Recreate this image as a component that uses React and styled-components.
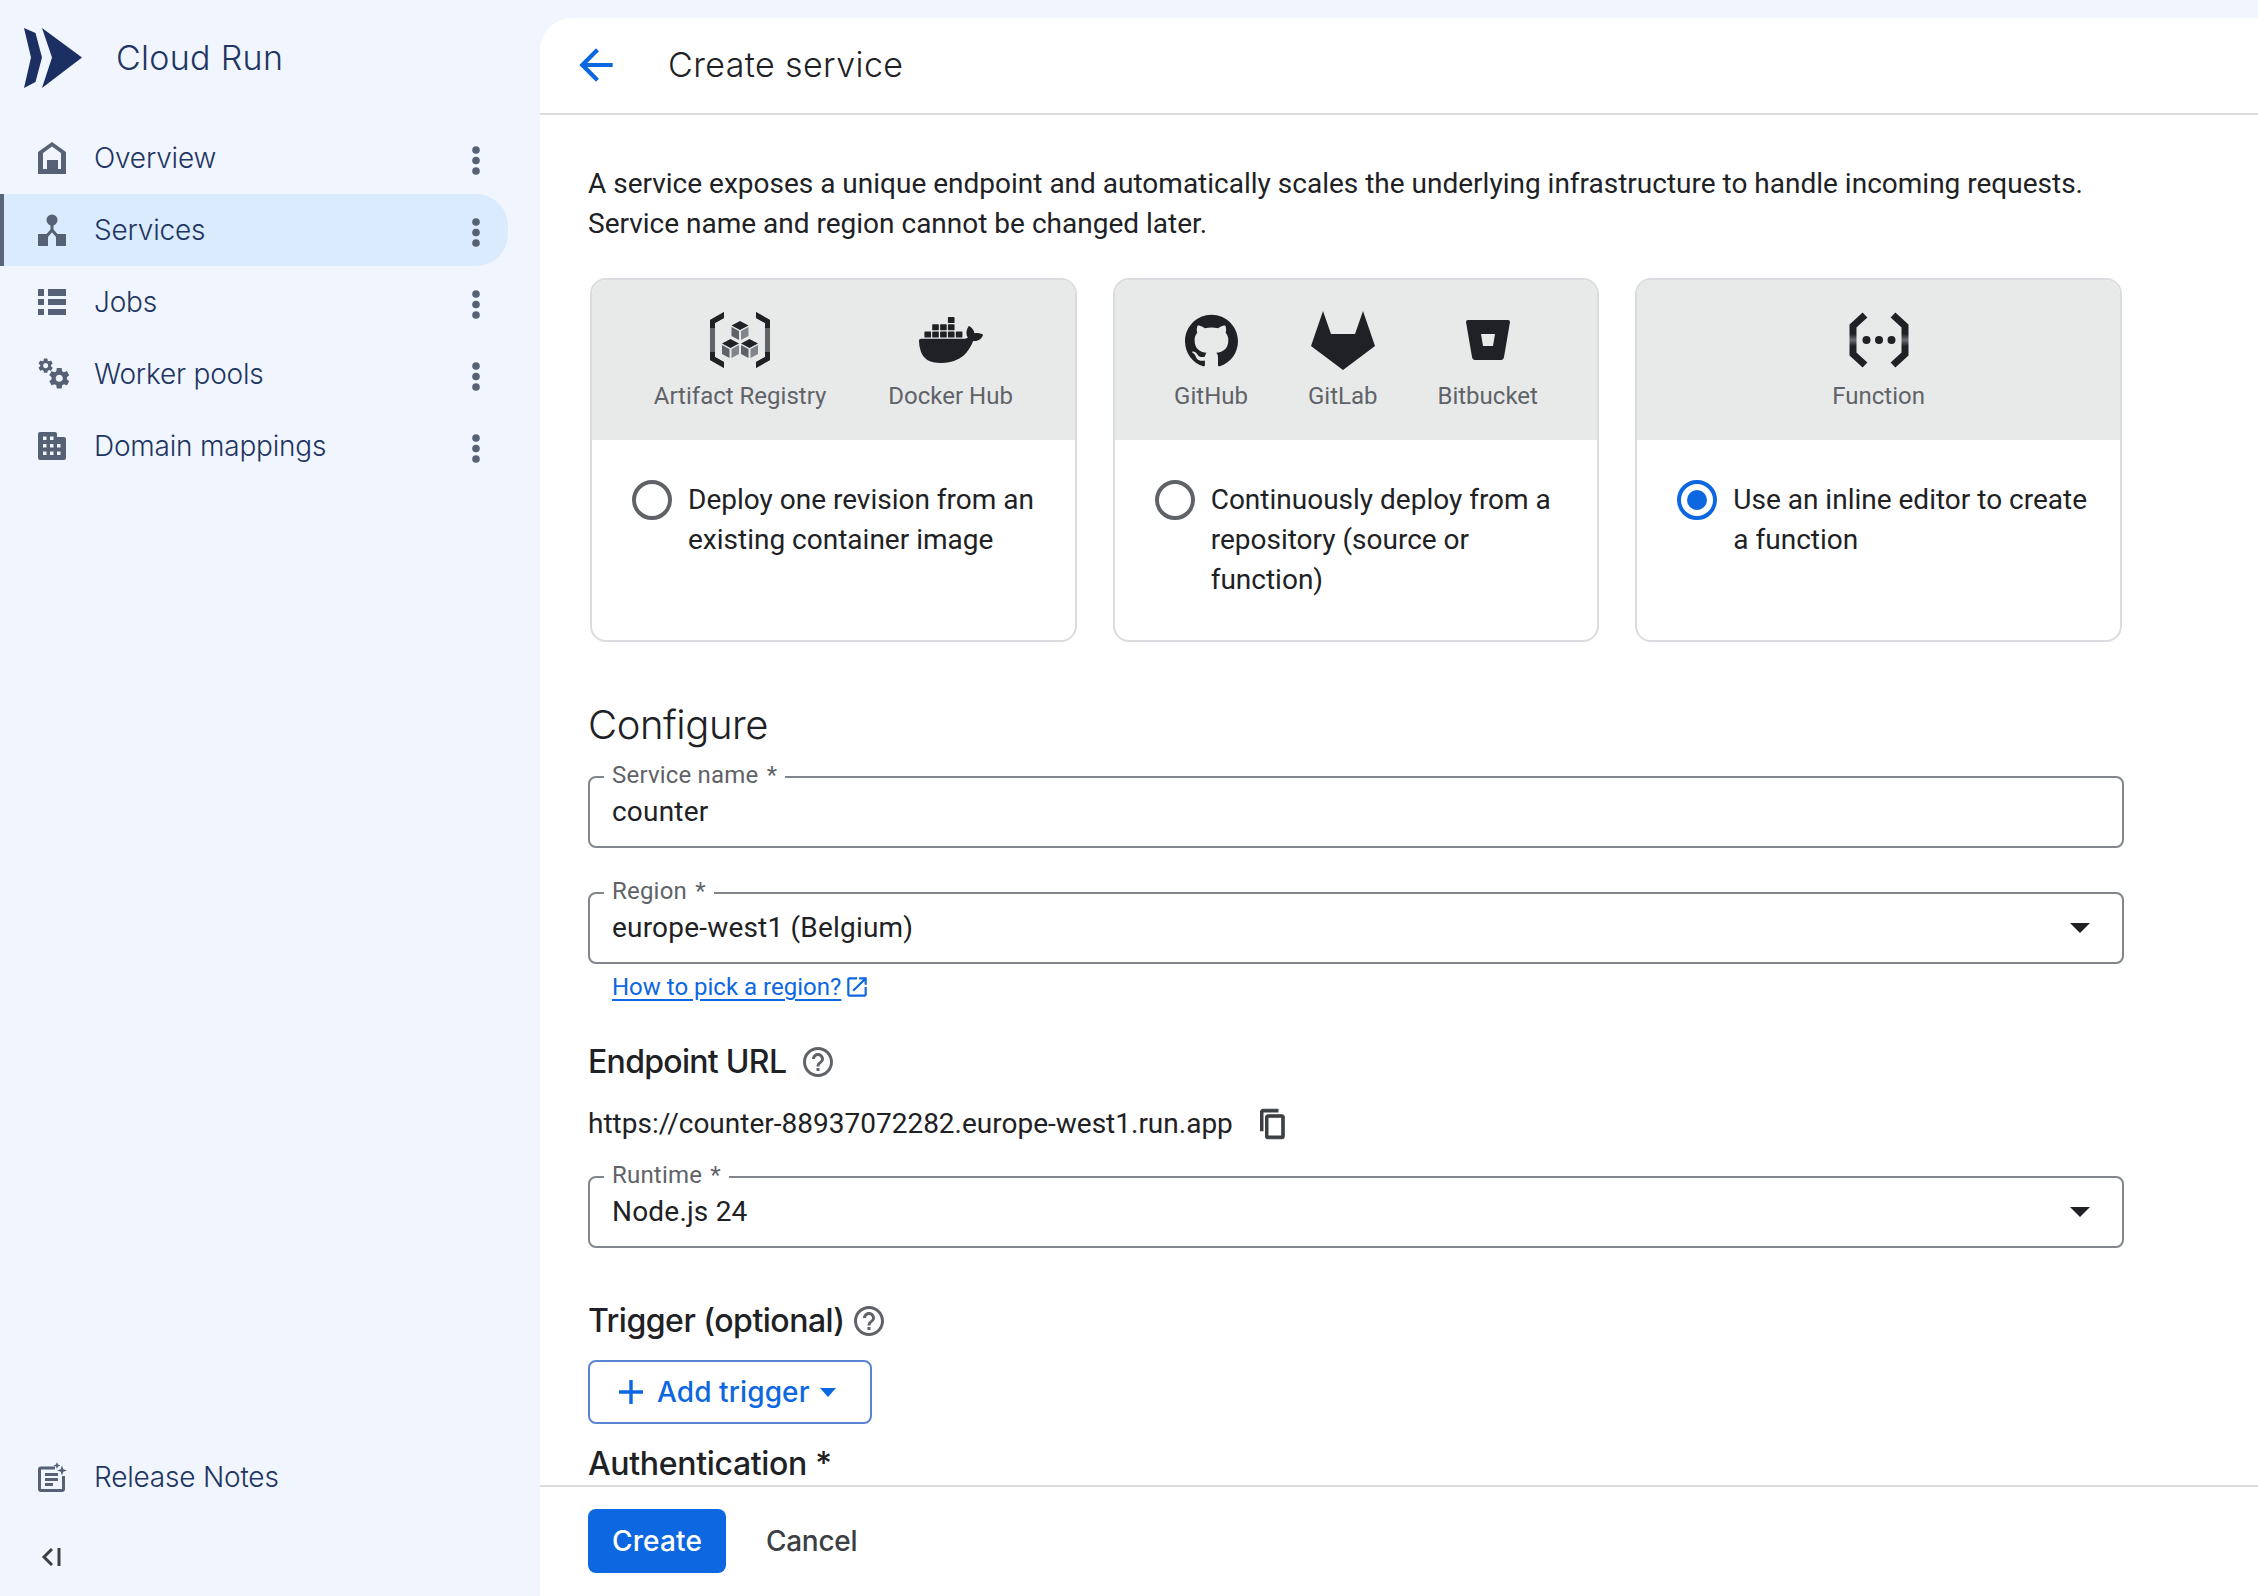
import React from "react";
import styled, { createGlobalStyle } from "styled-components";
import { SiDocker, SiGithub } from "react-icons/si";

const display = `"Inter", "Noto Sans", sans-serif`;
const body = `"Roboto", "Liberation Sans", sans-serif`;
const blue = "#0c67e0";

const Global = createGlobalStyle`
  html, body { margin: 0; padding: 0; height: 100%; background: #f0f5fe; }
  #root { height: 100%; }
  * { box-sizing: border-box; }
`;

const Shell = styled.div`
  display: grid;
  grid-template-columns: 540px 1fr;
  height: 1596px;
  overflow: hidden;
  background: #f0f5fe;
`;

const Sidebar = styled.aside`
  display: flex;
  flex-direction: column;
  height: 100%;
`;

const Brand = styled.div`
  display: flex;
  align-items: center;
  gap: 34px;
  height: 122px;
  padding: 0 0 6px 24px;
  color: #1b2f63;
`;

const BrandName = styled.span`
  font: 350 34px/40px ${display};
  letter-spacing: 0.3px;
  color: #1f3562;
`;

const NavList = styled.nav`
  display: flex;
  flex-direction: column;
  flex: 1;
`;

const NavRow = styled.div`
  display: flex;
  align-items: center;
  width: 508px;
  height: 72px;
  padding: 0 28px 0 ${(p) => (p.$active ? 34 : 38)}px;
  border-left: ${(p) => (p.$active ? "4px solid #5a6579" : "0")};
  border-radius: 0 32px 32px 0;
  background: ${(p) => (p.$active ? "#d9ebfc" : "transparent")};
`;

const IconSlot = styled.span`
  display: flex;
  align-items: center;
  width: 56px;
  flex: none;
  color: #566175;
`;

const NavLabel = styled.span`
  flex: 1;
  font: 350 28px/36px ${display};
  letter-spacing: -0.2px;
  color: #1f3562;
`;

const KebabIcon = styled.svg`
  width: 8px;
  height: 29px;
  margin-top: 4px;
  flex: none;
  fill: #566175;
`;

const SideFoot = styled.div`
  display: flex;
  flex-direction: column;
`;

const Collapse = styled.div`
  display: flex;
  align-items: center;
  height: 83px;
  padding: 4px 0 0 41px;
  color: #3c4043;
`;

const Main = styled.main`
  display: flex;
  flex-direction: column;
  height: 1578px;
  margin-top: 18px;
  background: #fff;
  border-top-left-radius: 32px;
  overflow: hidden;
`;

const TopBar = styled.header`
  display: flex;
  align-items: center;
  gap: 47px;
  flex: none;
  height: 97px;
  padding: 0 0 2px 31px;
  border-bottom: 2px solid #dadce0;
`;

const PageTitle = styled.h1`
  margin: 0;
  font: 350 34px/40px ${display};
  letter-spacing: 0.4px;
  color: #202124;
`;

const Content = styled.div`
  flex: 1;
  min-height: 0;
  overflow: hidden;
  padding: 49px 0 0 48px;
`;

const Column = styled.div`
  width: 1536px;
`;

const Intro = styled.p`
  margin: 0;
  font: 400 28px/40px ${body};
  color: #202124;
`;

const CardGrid = styled.div`
  display: grid;
  grid-template-columns: repeat(3, 1fr);
  gap: 36px;
  margin: 34px 2px 0;
`;

const Card = styled.div`
  height: 364px;
  border: 2px solid #dadce0;
  border-radius: 16px;
  overflow: hidden;
  background: #fff;
`;

const CardHead = styled.div`
  display: flex;
  justify-content: center;
  gap: ${(p) => p.$gap}px;
  height: 160px;
  padding-top: 30px;
  background: #e8eaea;
`;

const Source = styled.div`
  display: flex;
  flex-direction: column;
  align-items: center;
`;

const SourceIcon = styled.div`
  display: flex;
  align-items: center;
  justify-content: center;
  height: 60px;
  color: #202124;
`;

const SourceLabel = styled.span`
  margin-top: 10px;
  font: 400 24px/32px ${body};
  color: #5f6368;
`;

const CardBody = styled.div`
  display: flex;
  gap: 16px;
  padding: 40px 24px 0 40px;
`;

const Radio = styled.span`
  display: flex;
  align-items: center;
  justify-content: center;
  flex: none;
  width: 40px;
  height: 40px;
  border-radius: 50%;
  border: 4px solid ${(p) => (p.$on ? blue : "#5f6368")};
  &::after {
    content: "";
    display: ${(p) => (p.$on ? "block" : "none")};
    width: 20px;
    height: 20px;
    border-radius: 50%;
    background: ${blue};
  }
`;

const CardText = styled.span`
  font: 400 28px/40px ${body};
  color: #202124;
`;

const Section = styled.h2`
  margin: ${(p) => p.$top}px 0 0;
  font: 350 40px/48px ${display};
  letter-spacing: -0.45px;
  color: #202124;
`;

const Field = styled.div`
  position: relative;
  display: flex;
  align-items: center;
  justify-content: space-between;
  height: 72px;
  margin-top: ${(p) => p.$top}px;
  padding: 0 32px 0 22px;
  border: 2px solid #80868b;
  border-radius: 8px;
  font: 400 28px/40px ${body};
  letter-spacing: 0.2px;
  color: #202124;
`;

const FieldLabel = styled.label`
  position: absolute;
  top: -19px;
  left: 14px;
  padding: 0 8px;
  background: #fff;
  font: 400 24px/32px ${body};
  color: #5f6368;
`;

const Star = styled.span`
  margin-left: 2px;
`;

const Caret = styled.span`
  width: 0;
  height: 0;
  border-left: 10px solid transparent;
  border-right: 10px solid transparent;
  border-top: 10px solid #202124;
`;

const HelpRow = styled.div`
  display: flex;
  align-items: center;
  gap: 3px;
  margin: 7px 0 0 24px;
  font: 400 24px/32px ${body};
`;

const HelpLink = styled.a`
  color: ${blue};
  text-decoration: underline;
  text-underline-offset: 4px;
`;

const SubHead = styled.h3`
  display: flex;
  align-items: center;
  gap: ${(p) => p.$gap}px;
  margin: ${(p) => p.$top}px 0 0;
  font: 500 32px/40px ${display};
  letter-spacing: ${(p) => p.$track}px;
  color: #202124;
`;

const UrlRow = styled.div`
  display: flex;
  align-items: center;
  gap: 25px;
  margin-top: 22px;
  font: 400 28px/40px ${body};
  color: #202124;
`;

const AddButton = styled.button`
  display: flex;
  align-items: center;
  width: 284px;
  height: 64px;
  margin-top: 19px;
  padding: 0 0 0 29px;
  background: #fff;
  border: 2px solid #5a84d2;
  border-radius: 8px;
  font: 500 28px/36px ${display};
  letter-spacing: 0.1px;
  color: ${blue};
`;

const BtnCaret = styled.span`
  width: 0;
  height: 0;
  margin-left: 10px;
  border-left: 8px solid transparent;
  border-right: 8px solid transparent;
  border-top: 9px solid ${blue};
`;

const Footer = styled.footer`
  display: flex;
  align-items: center;
  gap: 16px;
  flex: none;
  height: 111px;
  padding: 0 0 2px 48px;
  border-top: 2px solid #dadce0;
  background: #fff;
`;

const CreateButton = styled.button`
  width: 138px;
  height: 64px;
  border: 0;
  border-radius: 8px;
  background: ${blue};
  font: 500 28px/36px ${display};
  letter-spacing: 0.15px;
  color: #fff;
`;

const CancelButton = styled.button`
  height: 64px;
  padding: 0 24px;
  border: 0;
  background: transparent;
  font: 500 28px/36px ${display};
  letter-spacing: -0.3px;
  color: #3c4043;
`;

const Logo = () => (
  <svg width="58" height="60" viewBox="0 0 58 60" fill="#1b2f63">
    <polygon points="0,0 11.5,5 18,29.5 11.5,54 0,60 7,29.5" />
    <polygon points="18,0 58,29.5 18,60 28,29.5" />
  </svg>
);

const HomeIcon = () => (
  <svg width="28" height="32" viewBox="0 0 28 32" fill="currentColor">
    <path fillRule="evenodd" d="M14 0 L28 10 V32 H0 V10 Z M14 4.5 L5 11 V27 H9 V18 H20 V27 H23 V11 Z" />
  </svg>
);

const ServicesIcon = () => (
  <svg width="28" height="32" viewBox="0 0 28 32" fill="currentColor">
    <circle cx="14" cy="6" r="5.5" />
    <rect x="0" y="20" width="10" height="12" />
    <rect x="18" y="20" width="10" height="12" />
    <path d="M14 10 V16 L8 23 M14 16 L20 23" fill="none" stroke="currentColor" strokeWidth="3" />
  </svg>
);

const JobsIcon = () => (
  <svg width="28" height="26" viewBox="0 0 28 26" fill="currentColor">
    <rect x="0" y="0" width="6" height="7" />
    <rect x="10" y="0" width="18" height="7" />
    <rect x="0" y="10" width="6" height="6" />
    <rect x="10" y="10" width="18" height="6" />
    <rect x="0" y="20" width="6" height="6" />
    <rect x="10" y="20" width="18" height="6" />
  </svg>
);

const gearPath =
  "M19.43 12.98c.04-.32.07-.64.07-.98s-.03-.66-.07-.98l2.11-1.65c.19-.15.24-.42.12-.64l-2-3.46c-.12-.22-.39-.3-.61-.22l-2.49 1c-.52-.4-1.08-.73-1.69-.98l-.38-2.65C14.46 2.18 14.25 2 14 2h-4c-.25 0-.46.18-.49.42l-.38 2.65c-.61.25-1.17.59-1.69.98l-2.49-1c-.23-.09-.49 0-.61.22l-2 3.46c-.13.22-.07.49.12.64l2.11 1.65c-.04.32-.07.65-.07.98s.03.66.07.98l-2.11 1.65c-.19.15-.24.42-.12.64l2 3.46c.12.22.39.3.61.22l2.49-1c.52.4 1.08.73 1.69.98l.38 2.65c.03.24.24.42.49.42h4c.25 0 .46-.18.49-.42l.38-2.65c.61-.25 1.17-.59 1.69-.98l2.49 1c.23.09.49 0 .61-.22l2-3.46c.12-.22.07-.49-.12-.64l-2.11-1.65zM12 15.5c-1.93 0-3.5-1.57-3.5-3.5s1.57-3.5 3.5-3.5 3.5 1.57 3.5 3.5-1.57 3.5-3.5 3.5z";

const GearsIcon = () => (
  <svg width="33" height="33" viewBox="0 0 33 33" fill="currentColor">
    <path d={gearPath} transform="translate(-1 -1) scale(0.72)" />
    <path d={gearPath} transform="translate(9 8) scale(1.02)" />
  </svg>
);

const DomainIcon = () => (
  <svg width="28" height="28" viewBox="0 0 28 28">
    <path d="M2 0 H17 Q19 0 19 2 V5 H26 Q28 5 28 7 V26 Q28 28 26 28 H2 Q0 28 0 26 V2 Q0 0 2 0 Z" fill="currentColor" />
    <g fill="#f0f5fe">
      <rect x="5" y="4.5" width="3.5" height="3.5" />
      <rect x="12" y="4.5" width="3.5" height="3.5" />
      <rect x="5" y="12" width="3.5" height="3.5" />
      <rect x="12" y="12" width="3.5" height="3.5" />
      <rect x="19" y="12" width="3.5" height="3.5" />
      <rect x="5" y="19.5" width="3.5" height="3.5" />
      <rect x="12" y="19.5" width="3.5" height="3.5" />
      <rect x="19" y="19.5" width="3.5" height="3.5" />
    </g>
  </svg>
);

const NotesIcon = () => (
  <svg width="29" height="30" viewBox="0 0 29 30" fill="none">
    <path d="M17 6 H3 Q1.5 6 1.5 7.5 V27 Q1.5 28.5 3 28.5 H24 Q25.5 28.5 25.5 27 V14" stroke="currentColor" strokeWidth="3" />
    <g fill="currentColor">
      <rect x="7" y="11" width="13" height="3" />
      <rect x="7" y="16" width="13" height="3" />
      <rect x="7" y="21" width="8" height="3" />
      <path d="M18 0 L19 2.5 L21.5 3.5 L19 4.5 L18 7 L17 4.5 L14.5 3.5 L17 2.5 Z" transform="translate(1 0)" />
      <path d="M24 3.5 L25.3 7.2 L29 8.5 L25.3 9.8 L24 13.5 L22.7 9.8 L19 8.5 L22.7 7.2 Z" />
    </g>
  </svg>
);

const CollapseIcon = () => (
  <svg width="20" height="20" viewBox="0 0 20 20" fill="none" stroke="currentColor" strokeWidth="3">
    <path d="M11 2 L3 10 L11 18" />
    <path d="M18 1 V19" />
  </svg>
);

const Kebab = () => (
  <KebabIcon viewBox="0 0 8 29">
    <circle cx="4" cy="4" r="3.8" />
    <circle cx="4" cy="14.5" r="3.8" />
    <circle cx="4" cy="25" r="3.8" />
  </KebabIcon>
);

const BackIcon = () => (
  <svg width="50" height="50" viewBox="0 0 24 24" fill={blue}>
    <path d="M20 11H7.83l5.59-5.59L12 4l-8 8 8 8 1.41-1.41L7.83 13H20v-2z" />
  </svg>
);

const Cube = ({ x, y }) => (
  <g transform={`translate(${x} ${y})`}>
    <polygon points="8.5,0 17,4.5 8.5,9 0,4.5" fill="#202124" />
    <polygon points="0,6 7.5,10 7.5,19 0,15" fill="#5f6368" />
    <polygon points="9.5,10 17,6 17,15 9.5,19" fill="#80868b" />
  </g>
);

const ArtifactIcon = () => (
  <svg width="60" height="56" viewBox="0 0 60 56">
    <polygon points="14,0 14,6 5,11 5,45 14,50 14,56 0,48 0,8" fill="#5f6368" />
    <polygon points="14,0 14,6 5,11 5,16 0,16 0,8" fill="#202124" />
    <polygon points="14,56 14,50 5,45 5,40 0,40 0,48" fill="#202124" />
    <polygon points="46,0 46,6 55,11 55,45 46,50 46,56 60,48 60,8" fill="#5f6368" />
    <polygon points="46,0 46,6 55,11 55,16 60,16 60,8" fill="#202124" />
    <polygon points="46,56 46,50 55,45 55,40 60,40 60,48" fill="#202124" />
    <Cube x="21.5" y="9" />
    <Cube x="12" y="27" />
    <Cube x="31" y="27" />
  </svg>
);

const GitLabIcon = () => (
  <svg width="64" height="59" viewBox="0 0 64 59" fill="currentColor">
    <polygon points="12,0 20,23 44,23 52,0 64,35 32,59 0,35" />
  </svg>
);

const BitbucketIcon = () => (
  <svg width="44" height="40" viewBox="0 0 44 40" fill="currentColor">
    <path
      fillRule="evenodd"
      d="M2 0 H42 Q44 0 44 2 L38 37 Q37.5 40 35 40 H9 Q6.5 40 6 37 L0 2 Q0 0 2 0 Z M15 14 L17 26 H27 L29 14 Z"
    />
  </svg>
);

const FunctionIcon = () => (
  <svg width="60" height="56" viewBox="0 0 60 56">
    <defs>
      <linearGradient id="fnGrad" x1="0" y1="0" x2="0" y2="1">
        <stop offset="0" stopColor="#202124" />
        <stop offset="0.38" stopColor="#202124" />
        <stop offset="0.5" stopColor="#6b6f73" />
        <stop offset="0.62" stopColor="#202124" />
        <stop offset="1" stopColor="#202124" />
      </linearGradient>
    </defs>
    <path d="M16 3 L4 14 V42 L16 53" fill="none" stroke="url(#fnGrad)" strokeWidth="7" />
    <path d="M44 3 L56 14 V42 L44 53" fill="none" stroke="url(#fnGrad)" strokeWidth="7" />
    <g fill="#202124">
      <circle cx="17.5" cy="28" r="4" />
      <circle cx="30" cy="28" r="4" />
      <circle cx="42.5" cy="28" r="4" />
    </g>
  </svg>
);

const HelpIcon = () => (
  <svg width="36" height="36" viewBox="0 0 24 24" fill="#5f6368">
    <path d="M11 18h2v-2h-2v2zm1-16C6.48 2 2 6.48 2 12s4.48 10 10 10 10-4.48 10-10S17.52 2 12 2zm0 18c-4.41 0-8-3.59-8-8s3.59-8 8-8 8 3.59 8 8-3.59 8-8 8zm0-14c-2.21 0-4 1.79-4 4h2c0-1.1.9-2 2-2s2 .9 2 2c0 2-3 1.75-3 5h2c0-2.25 3-2.5 3-5 0-2.21-1.79-4-4-4z" />
  </svg>
);

const CopyIcon = () => (
  <svg width="30" height="32" viewBox="0 0 24 24" fill="#3c4043" stroke="#3c4043" strokeWidth="0.8" preserveAspectRatio="none">
    <path d="M16 1H4c-1.1 0-2 .9-2 2v14h2V3h12V1zm3 4H8c-1.1 0-2 .9-2 2v14c0 1.1.9 2 2 2h11c1.1 0 2-.9 2-2V7c0-1.1-.9-2-2-2zm0 16H8V7h11v14z" />
  </svg>
);

const OpenIcon = () => (
  <svg width="26" height="26" viewBox="0 0 24 24" fill={blue}>
    <path d="M19 19H5V5h7V3H5c-1.11 0-2 .9-2 2v14c0 1.1.89 2 2 2h14c1.1 0 2-.9 2-2v-7h-2v7zM14 3v2h3.59l-9.83 9.83 1.41 1.41L19 6.41V10h2V3h-7z" />
  </svg>
);

const PlusIcon = () => (
  <svg width="24" height="24" viewBox="0 0 24 24" fill="none" stroke={blue} strokeWidth="3.4" style={{ marginRight: 14 }}>
    <path d="M12 0 V24 M0 12 H24" />
  </svg>
);

const nav = [
  { label: "Overview", Icon: HomeIcon },
  { label: "Services", Icon: ServicesIcon, active: true },
  { label: "Jobs", Icon: JobsIcon },
  { label: "Worker pools", Icon: GearsIcon },
  { label: "Domain mappings", Icon: DomainIcon },
];

const cards = [
  {
    text: "Deploy one revision from an existing container image",
    gap: 62,
    sources: [
      { label: "Artifact Registry", icon: <ArtifactIcon /> },
      { label: "Docker Hub", icon: <SiDocker size={64} /> },
    ],
  },
  {
    text: "Continuously deploy from a repository (source or function)",
    gap: 60,
    sources: [
      { label: "GitHub", icon: <SiGithub size={53} /> },
      { label: "GitLab", icon: <GitLabIcon /> },
      { label: "Bitbucket", icon: <BitbucketIcon /> },
    ],
  },
  {
    text: "Use an inline editor to create a function",
    on: true,
    gap: 60,
    sources: [{ label: "Function", icon: <FunctionIcon /> }],
  },
];

export default function App() {
  return (
    <>
      <Global />
      <Shell>
        <Sidebar>
          <Brand>
            <Logo />
            <BrandName>Cloud Run</BrandName>
          </Brand>
          <NavList>
            {nav.map(({ label, Icon, active }) => (
              <NavRow key={label} $active={active}>
                <IconSlot>
                  <Icon />
                </IconSlot>
                <NavLabel>{label}</NavLabel>
                <Kebab />
              </NavRow>
            ))}
          </NavList>
          <SideFoot>
            <NavRow>
              <IconSlot>
                <NotesIcon />
              </IconSlot>
              <NavLabel>Release Notes</NavLabel>
            </NavRow>
            <Collapse>
              <CollapseIcon />
            </Collapse>
          </SideFoot>
        </Sidebar>
        <Main>
          <TopBar>
            <BackIcon />
            <PageTitle>Create service</PageTitle>
          </TopBar>
          <Content>
            <Column>
              <Intro>
                A service exposes a unique endpoint and automatically scales the underlying infrastructure to handle
                incoming requests.
                <br />
                Service name and region cannot be changed later.
              </Intro>
              <CardGrid>
                {cards.map((c) => (
                  <Card key={c.text}>
                    <CardHead $gap={c.gap}>
                      {c.sources.map((s) => (
                        <Source key={s.label}>
                          <SourceIcon>{s.icon}</SourceIcon>
                          <SourceLabel>{s.label}</SourceLabel>
                        </Source>
                      ))}
                    </CardHead>
                    <CardBody>
                      <Radio $on={c.on} />
                      <CardText>{c.text}</CardText>
                    </CardBody>
                  </Card>
                ))}
              </CardGrid>
              <Section $top={59}>Configure</Section>
              <Field $top={27}>
                <FieldLabel>
                  Service name <Star>*</Star>
                </FieldLabel>
                counter
              </Field>
              <Field $top={44}>
                <FieldLabel>
                  Region <Star>*</Star>
                </FieldLabel>
                europe-west1 (Belgium)
                <Caret />
              </Field>
              <HelpRow>
                <HelpLink>How to pick a region?</HelpLink>
                <OpenIcon />
              </HelpRow>
              <SubHead $top={39} $gap={14} $track={-0.7}>
                Endpoint URL <HelpIcon />
              </SubHead>
              <UrlRow>
                https://counter-88937072282.europe-west1.run.app
                <CopyIcon />
              </UrlRow>
              <Field $top={32}>
                <FieldLabel>
                  Runtime <Star>*</Star>
                </FieldLabel>
                Node.js 24
                <Caret />
              </Field>
              <SubHead $top={53} $gap={6} $track={-0.5}>
                Trigger (optional) <HelpIcon />
              </SubHead>
              <AddButton>
                <PlusIcon />
                Add trigger
                <BtnCaret />
              </AddButton>
              <SubHead $top={20} $track={-0.33}>
                Authentication *
              </SubHead>
            </Column>
          </Content>
          <Footer>
            <CreateButton>Create</CreateButton>
            <CancelButton>Cancel</CancelButton>
          </Footer>
        </Main>
      </Shell>
    </>
  );
}
